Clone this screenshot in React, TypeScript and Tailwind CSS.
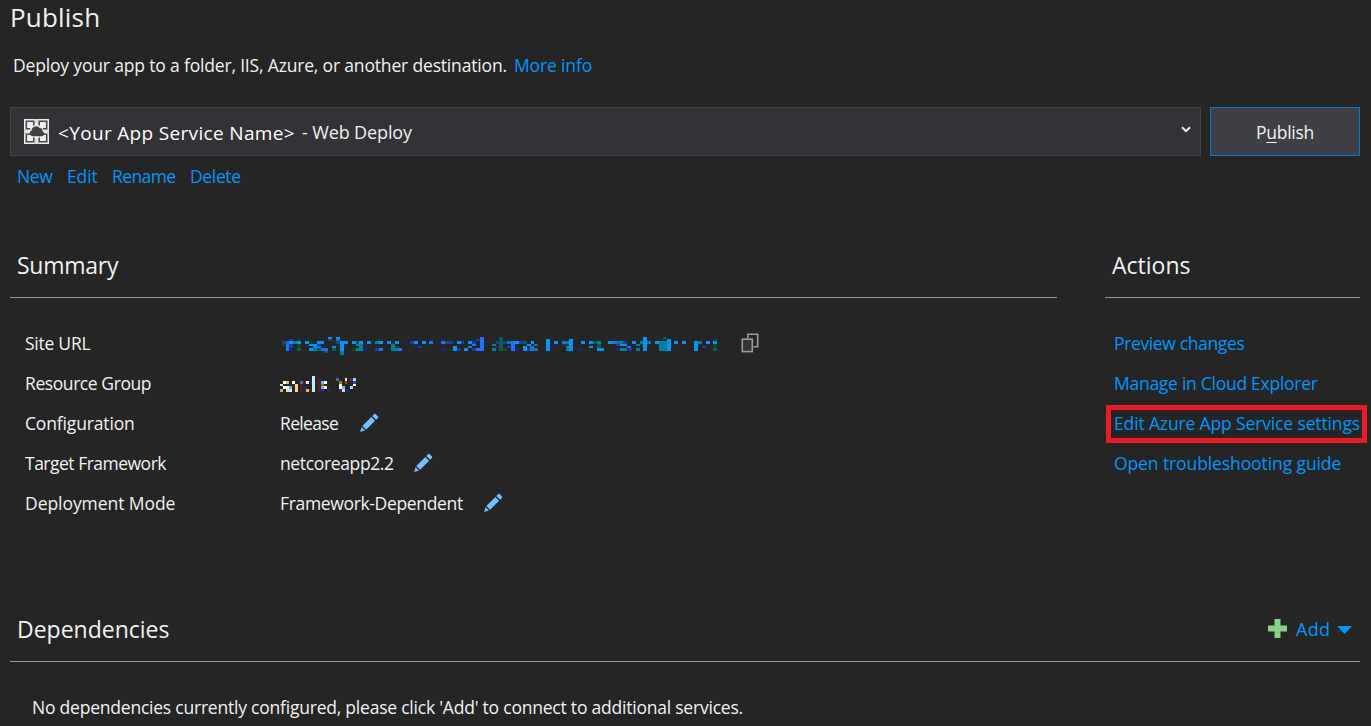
import type { ReactNode } from "react";

type Cell = [number, number, number, number, string];

const B = "#0097fb";
const R = "#1e70ff";
const I = "#2038a8";
const D = "#25217c";
const T = "#00809c";
const G = "#0c4a26";
const E = "#07604f";
const K = "#1e2a28";

const urlCells: Cell[] = [
  [21, 36, 12, 6, K], [42, 42, 12, 6, I], [66, 42, 12, 6, G], [21, 48, 12, 9, I], [33, 48, 9, 9, T], [42, 48, 12, 9, B], [54, 48, 12, 9, T], [66, 48, 12, 9, B],
  [21, 57, 12, 6, G], [33, 57, 9, 12, R], [42, 57, 12, 12, I], [66, 57, 12, 12, G], [33, 69, 9, 9, R], [42, 69, 12, 9, D], [66, 69, 12, 9, E],
  [90, 48, 12, 9, B], [102, 48, 12, 9, G], [126, 48, 21, 9, B], [102, 57, 24, 6, B], [126, 57, 12, 6, I], [114, 63, 24, 6, R], [102, 69, 12, 9, B], [114, 69, 12, 9, T], [126, 69, 12, 9, E], [138, 69, 21, 9, R], [147, 78, 12, 6, E],
  [159, 36, 12, 6, B], [183, 36, 12, 6, B], [159, 42, 12, 6, I], [183, 42, 12, 6, T], [171, 48, 12, 3, G], [183, 48, 12, 9, I], [195, 48, 12, 9, B], [207, 48, 12, 9, B], [195, 57, 12, 21, B], [171, 63, 12, 6, B], [171, 69, 12, 9, E], [195, 78, 12, 12, T],
  [231, 48, 12, 9, B], [243, 48, 9, 9, G], [252, 48, 12, 9, B], [276, 48, 12, 9, B], [243, 57, 21, 6, T], [264, 57, 12, 6, D], [252, 63, 12, 6, T], [231, 69, 12, 9, G], [243, 69, 21, 9, T], [264, 69, 12, 9, D],
  [300, 48, 12, 9, T], [312, 48, 12, 9, B], [336, 48, 12, 9, B], [360, 48, 12, 9, B], [300, 69, 12, 9, I], [312, 69, 12, 9, R], [348, 57, 12, 12, T], [360, 63, 12, 6, G], [348, 69, 21, 9, T], [369, 69, 12, 9, R],
  [393, 36, 12, 6, D], [405, 48, 12, 9, I], [417, 48, 12, 9, B], [441, 48, 12, 9, B], [462, 48, 12, 9, R], [417, 57, 12, 6, D], [429, 63, 12, 6, I], [441, 69, 12, 6, K],
  [498, 42, 12, 6, D], [498, 48, 12, 9, R], [510, 48, 12, 9, E], [522, 48, 12, 9, I], [546, 48, 12, 9, B], [558, 48, 9, 9, I], [579, 48, 12, 9, B], [591, 48, 12, 9, I], [603, 42, 12, 6, I], [615, 36, 12, 42, R],
  [498, 69, 12, 9, D], [534, 63, 12, 15, B], [546, 69, 12, 9, I], [567, 69, 12, 9, B], [579, 63, 12, 6, R], [591, 57, 12, 6, R], [591, 69, 12, 9, I], [603, 69, 12, 9, R],
  [651, 48, 12, 6, K], [651, 57, 12, 6, T], [651, 69, 12, 9, T], [663, 48, 9, 9, I], [672, 36, 12, 42, E], [684, 48, 12, 9, I], [663, 63, 9, 6, D], [696, 48, 12, 9, T], [684, 69, 12, 9, G], [696, 63, 12, 6, I],
  [708, 48, 12, 30, R], [720, 48, 12, 9, B], [732, 48, 12, 9, I], [744, 48, 12, 9, E], [720, 69, 12, 9, D], [744, 63, 12, 15, B], [756, 57, 12, 6, B], [768, 48, 9, 9, B], [756, 69, 12, 9, I], [777, 57, 12, 6, T], [765, 63, 12, 15, R], [777, 69, 12, 9, T],
  [813, 42, 12, 36, B], [825, 63, 12, 6, D], [837, 48, 12, 9, B], [861, 48, 12, 9, R], [873, 48, 9, 9, T], [861, 57, 12, 6, G], [882, 42, 12, 36, B], [873, 63, 9, 15, T], [906, 69, 12, 9, D], [918, 48, 12, 9, B],
  [942, 48, 12, 9, B], [954, 48, 12, 9, E], [966, 48, 12, 9, T], [942, 63, 12, 6, B], [966, 57, 12, 12, E], [966, 69, 21, 9, B],
  [999, 48, 12, 9, B], [1011, 48, 12, 9, R], [1023, 48, 21, 9, T], [1044, 48, 12, 9, I], [1023, 57, 12, 6, I], [1035, 57, 21, 6, B], [1056, 63, 12, 6, R], [1023, 69, 12, 9, D], [1035, 69, 21, 9, T],
  [1071, 48, 12, 9, B], [1083, 57, 12, 6, T], [1059, 69, 12, 9, I], [1083, 69, 12, 9, T], [1104, 36, 12, 42, B], [1095, 48, 9, 9, T], [1116, 48, 12, 9, T],
  [1140, 48, 12, 9, B], [1152, 48, 12, 30, T], [1164, 36, 12, 6, E], [1164, 48, 12, 30, T], [1176, 42, 12, 36, B], [1188, 63, 9, 6, D], [1197, 48, 12, 9, B], [1221, 48, 12, 9, B],
  [1257, 48, 12, 30, B], [1269, 48, 12, 9, T], [1281, 63, 12, 6, I], [1293, 48, 12, 9, B], [1305, 48, 9, 6, D], [1314, 42, 12, 6, G], [1314, 48, 12, 9, B], [1314, 57, 12, 12, G], [1314, 69, 12, 9, E],
];

const groupCells: Cell[] = [
  [24, 168, 9, 9, "#ffffff"], [33, 168, 9, 9, "#f2b272"], [51, 168, 9, 9, "#ffffff"], [15, 177, 9, 6, "#b5f4f4"], [24, 183, 18, 9, "#ffffff"], [42, 183, 9, 9, "#70b4f4"], [15, 192, 9, 9, "#b6b671"], [33, 192, 9, 9, "#f4d596"], [42, 192, 9, 9, "#b5f4f4"], [60, 177, 9, 24, "#f4d596"],
  [75, 168, 9, 9, "#4c70b8"], [84, 168, 9, 9, "#4c2228"], [93, 168, 9, 9, "#ffffff"], [102, 168, 9, 9, "#25258a"], [111, 153, 9, 48, "#b5f4f4"], [75, 177, 9, 24, "#4c2228"], [84, 183, 9, 9, "#25258a"], [93, 192, 9, 9, "#f2b272"], [102, 192, 9, 9, "#4c2228"], [120, 168, 9, 9, "#4c2228"], [129, 159, 9, 42, "#4c2228"],
  [138, 168, 9, 9, "#70b4f4"], [147, 168, 9, 9, "#ffffff"], [138, 177, 9, 6, "#a76820"], [147, 183, 9, 9, "#ffffff"], [138, 183, 9, 9, "#70b4f4"], [156, 192, 9, 9, "#4c2228"], [138, 192, 9, 9, "#25258a"],
  [183, 159, 9, 9, "#2878b8"], [192, 168, 9, 9, "#b8701a"], [210, 159, 6, 9, "#ffffff"], [210, 168, 6, 9, "#8c4a20"], [192, 177, 9, 6, "#f4f4b5"], [192, 183, 9, 9, "#ffffff"], [201, 183, 9, 9, "#70b4f4"], [201, 192, 9, 9, "#f4d596"], [192, 192, 9, 9, "#25258a"], [216, 192, 9, 9, "#25258a"],
  [225, 159, 9, 9, "#6c2228"], [234, 159, 9, 9, "#9adcff"], [234, 168, 9, 9, "#2450a0"], [234, 177, 9, 6, "#ffffff"], [225, 183, 9, 9, "#9adcff"],
];

function Mosaic({ cells, top, className }: { cells: Cell[]; top: number; className: string }) {
  return (
    <svg className={className} viewBox={`15 ${top} 1320 72`} preserveAspectRatio="xMinYMin meet" shapeRendering="crispEdges">
      {cells.map(([x, y, w, h, c], i) => (
        <rect key={i} x={x} y={y} width={w} height={h} fill={c} />
      ))}
    </svg>
  );
}

function Pencil() {
  return (
    <svg className="ml-[19px] size-5 shrink-0" viewBox="0 0 20 20" fill="#75bfff">
      <path d="M13.3 3 15.2 1.1Q15.9.6 16.6 1.1L19 3.5Q19.5 4.2 19 4.9L17.1 6.8z" />
      <path d="M12.3 4 16.1 7.8 7.1 16.8 3.3 13z" />
      <path d="M2.5 14.1 6 17.6 1.2 19z" />
    </svg>
  );
}

function CopyIcon() {
  return (
    <svg className="ml-[21px] h-5 w-[18px] shrink-0" viewBox="0 0 18 20" fill="none" stroke="#999999" strokeWidth="1.6">
      <path d="M6.8 5V1.3h9.9v12.4H12.4" />
      <rect x="1.3" y="6.2" width="10" height="12.4" fill="#333337" />
    </svg>
  );
}

function AppServiceIcon() {
  return (
    <svg className="size-[25px] shrink-0" viewBox="0 0 25 25">
      <rect width="25" height="25" fill="#efefef" />
      <g fill="#efefef" stroke="#4a4a4a" strokeWidth="1.6">
        <path d="M9.8 6.5V2.3H2.3v7.5h4M15.2 6.5V2.3h7.5v7.5h-4M9.8 18.5v4.2H2.3v-7.5h4M15.2 18.5v4.2h7.5v-7.5h-4" />
      </g>
      <path d="M11 0v5M14 0v5M11 20v5M14 20v5M0 11h4M0 14h4M21 11h4M21 14h4" stroke="#a9a9a9" strokeWidth=".8" />
      <path d="M8.2 17.2a3 3 0 0 1-.6-5.8A4.6 4.6 0 0 1 15.8 9a3.3 3.3 0 0 1 2.8 3.2 2.6 2.6 0 0 1-.4 5z" fill="#424242" />
    </svg>
  );
}

function Row({ label, children }: { label: ReactNode; children: ReactNode }) {
  return (
    <div className="flex h-10 items-center">
      <div className="w-[255px] shrink-0">{label}</div>
      {children}
    </div>
  );
}

export default function App() {
  return (
    <main className="flex h-[726px] w-[1371px] flex-col overflow-hidden whitespace-nowrap bg-[#252526] pr-[11px] pl-2.5 font-['Open_Sans','Noto_Sans',sans-serif] text-[17.5px] leading-6 text-[#f1f1f1]">
      <h1 className="h-9 text-[26px] leading-[34px] tracking-[0.2px]">Publish</h1>
      <p className="mt-[17px] flex h-6 pl-[3px]">
        <span className="w-[501px] tracking-[-0.17px]">Deploy your app to a folder, IIS, Azure, or another destination.</span>
        <a className="tracking-[-0.15px] text-[#0097fb]">More info</a>
      </p>

      <div className="mt-[30px] flex h-[49px] gap-[9px]">
        <div className="flex w-[1191px] items-center border border-[#434346] bg-[#333337] pr-[9px] pl-[13px]">
          <AppServiceIcon />
          <span className="mt-0.5 ml-[9px] w-[244px] text-[19px] font-medium tracking-[0.33px] text-white">&lt;Your App Service Name&gt;</span>
          <span className="text-[18px] tracking-[-0.13px]">- Web Deploy</span>
          <svg className="mb-1 ml-auto h-[7px] w-[10px]" viewBox="0 0 10 7" fill="none" stroke="#f1f1f1" strokeWidth="2">
            <path d="M1 1.2 5 5.2 9 1.2" />
          </svg>
        </div>
        <button className="flex w-[150px] items-center justify-center border border-[#007acc] bg-[#3f3f46] tracking-[-0.3px]">
          P<span className="underline decoration-1 underline-offset-[3px] [text-decoration-skip-ink:none]">u</span>blish
        </button>
      </div>

      <nav className="mt-2 flex h-6 pl-[7px] text-[#0097fb]">
        <a className="w-[50px] tracking-[-0.4px]">New</a>
        <a className="w-[45px] tracking-[-0.15px]">Edit</a>
        <a className="w-[78px] tracking-[-0.6px]">Rename</a>
        <a className="tracking-[-0.35px]">Delete</a>
      </nav>

      <div className="mt-[62px] flex justify-between">
        <section className="w-[1047px]">
          <h2 className="h-12 border-b border-[#999999] pl-[7px] text-[23px] leading-[30px] tracking-[-0.25px]">Summary</h2>
          <div className="mt-[25px] pl-[15px]">
            <Row label={<span className="tracking-[-0.25px]">Site URL</span>}>
              <Mosaic cells={urlCells} top={36} className="mt-[12px] h-6 w-[440px] shrink-0" />
              <CopyIcon />
            </Row>
            <Row label={<span className="tracking-[-0.42px]">Resource Group</span>}>
              <Mosaic cells={groupCells} top={153} className="mt-[10px] h-6 w-[440px]" />
            </Row>
            <Row label={<span className="tracking-[-0.15px]">Configuration</span>}>
              <span className="w-[60px] tracking-[-0.65px]">Release</span>
              <Pencil />
            </Row>
            <Row label={<span className="tracking-[-0.5px]">Target Framework</span>}>
              <span className="w-[114px] tracking-[-0.36px]">netcoreapp2.2</span>
              <Pencil />
            </Row>
            <Row label={<span className="tracking-[-0.06px]">Deployment Mode</span>}>
              <span className="w-[184px] tracking-[-0.34px]">Framework-Dependent</span>
              <Pencil />
            </Row>
          </div>
        </section>

        <section className="w-[255px]">
          <h2 className="h-12 border-b border-[#999999] pl-[7px] text-[23px] leading-[30px]">Actions</h2>
          <div className="mt-[25px] text-[#0097fb]">
            <a className="flex h-10 items-center pl-[9px] tracking-[-0.36px]">Preview changes</a>
            <a className="flex h-10 items-center pl-[9px] tracking-[-0.27px]">Manage in Cloud Explorer</a>
            <a className="mt-0.5 -mr-[7px] ml-px flex h-[38px] items-center border-[5px] border-[#ed1c24] pb-0.5 pl-[3px] tracking-[-0.14px]">Edit Azure App Service settings</a>
            <a className="flex h-10 items-center pl-[9px] tracking-[-0.1px]">Open troubleshooting guide</a>
          </div>
        </section>
      </div>

      <section className="mt-[91px]">
        <div className="flex h-12 justify-between border-b border-[#999999] pl-[7px]">
          <h2 className="text-[23px] leading-[30px]">Dependencies</h2>
          <div className="flex h-[30px] items-center pr-2 text-[18px] text-[#0097fb]">
            <svg className="mb-px size-[19px]" viewBox="0 0 19 19">
              <path d="M6.5 0h6v6.5H19v6h-6.5V19h-6v-6.5H0v-6h6.5z" fill="#89d185" />
            </svg>
            <span className="ml-[9px] w-[41px] tracking-[0.3px]">Add</span>
            <svg className="mt-0.5 h-2 w-[15px]" viewBox="0 0 15 8">
              <path d="M0 0h15L7.5 8z" fill="#0097fb" />
            </svg>
          </div>
        </div>
        <p className="mt-[33px] pl-[22px] tracking-[-0.22px]">No dependencies currently configured, please click 'Add' to connect to additional services.</p>
      </section>
    </main>
  );
}
